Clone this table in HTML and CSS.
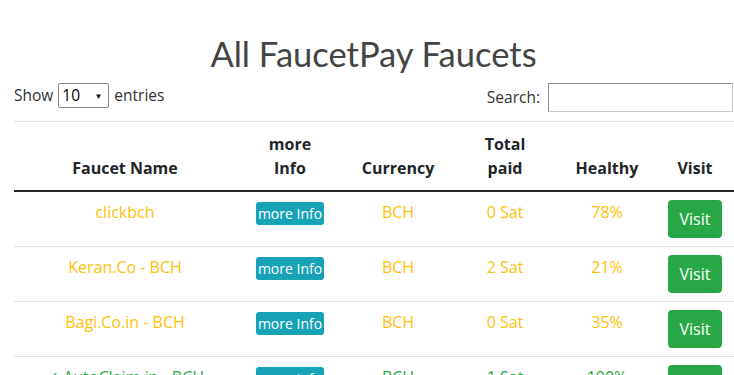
FILE: index.html
```html
<!DOCTYPE html>
<html lang="en">
<head>
<meta charset="utf-8">
<title>All FaucetPay Faucets</title>
<link rel="stylesheet" href="styles.css">
</head>
<body>
<div class="page">
  <h2 class="title">All FaucetPay Faucets</h2>
  <div class="controls">
    <label class="length">Show <span class="select"><span class="select-value">10</span><span class="select-arrow">▼</span></span> entries</label>
    <label class="search">Search: <input type="search" class="search-input"></label>
  </div>
  <table class="faucets">
    <colgroup>
      <col class="c-name"><col class="c-info"><col class="c-cur"><col class="c-paid"><col class="c-health"><col class="c-visit">
    </colgroup>
    <thead>
      <tr>
        <th>Faucet Name</th>
        <th>more<br>Info</th>
        <th>Currency</th>
        <th>Total<br>paid</th>
        <th>Healthy</th>
        <th>Visit</th>
      </tr>
    </thead>
    <tbody>
      <tr class="warn">
        <td>clickbch</td>
        <td><span class="info-btn">more Info</span></td>
        <td>BCH</td>
        <td>0 Sat</td>
        <td>78%</td>
        <td><span class="visit-btn">Visit</span></td>
      </tr>
      <tr class="warn">
        <td>Keran.Co - BCH</td>
        <td><span class="info-btn">more Info</span></td>
        <td>BCH</td>
        <td>2 Sat</td>
        <td>21%</td>
        <td><span class="visit-btn">Visit</span></td>
      </tr>
      <tr class="warn">
        <td>Bagi.Co.in - BCH</td>
        <td><span class="info-btn">more Info</span></td>
        <td>BCH</td>
        <td>0 Sat</td>
        <td>35%</td>
        <td><span class="visit-btn">Visit</span></td>
      </tr>
      <tr class="ok">
        <td>✓ AutoClaim.in - BCH</td>
        <td><span class="info-btn">more Info</span></td>
        <td>BCH</td>
        <td>1 Sat</td>
        <td>100%</td>
        <td><span class="visit-btn">Visit</span></td>
      </tr>
    </tbody>
  </table>
</div>
</body>
</html>
```

FILE: styles.css
```css
html, body {
  margin: 0;
  padding: 0;
  background: #fff;
  overflow: hidden;
}
body {
  font-family: "Open Sans", "Liberation Sans", sans-serif;
  font-size: 16px;
  line-height: 1.5;
  color: #212529;
}
.page {
  padding: 0 1px 0 14px;
}
.title {
  margin: 0;
  padding-top: 34px;
  font-family: Lato, "Open Sans", sans-serif;
  font-weight: 400;
  font-size: 34.5px;
  line-height: 40px;
  color: #444;
  text-align: center;
}
.controls {
  display: flex;
  justify-content: space-between;
  align-items: flex-start;
  margin-top: 9px;
  font-size: 15.5px;
  color: #333;
  height: 38px;
}
.length {
  display: flex;
  align-items: center;
  gap: 5px;
  height: 25px;
}
.select {
  display: inline-flex;
  align-items: center;
  justify-content: space-between;
  box-sizing: border-box;
  width: 51px;
  height: 25px;
  border: 1px solid #8a8a8a;
  border-radius: 2px;
  padding: 0 6px 0 3px;
  color: #000;
}
.select-value {
  font-size: 15.5px;
}
.select-arrow {
  font-size: 8px;
  line-height: 1;
}
.search {
  display: flex;
  align-items: center;
  gap: 8px;
  height: 29px;
}
.search-input {
  box-sizing: border-box;
  width: 185px;
  height: 29px;
  margin: 0;
  border: 1px solid #c8c8c8;
  border-top-color: #8f8f8f;
  border-left-color: #8f8f8f;
  padding: 2px 4px;
  font: inherit;
}
.faucets {
  width: 720px;
  border-collapse: collapse;
  table-layout: fixed;
  text-align: center;
}
.c-name { width: 222px; }
.c-info { width: 108px; }
.c-cur { width: 108px; }
.c-paid { width: 106px; }
.c-health { width: 98px; }
.c-visit { width: 78px; }
.faucets th {
  font-weight: 700;
  vertical-align: bottom;
  padding: 10px 4px 10px;
  border-top: 1px solid #dee2e6;
  border-bottom: 2px solid #212529;
}
.faucets td {
  vertical-align: top;
  padding: 8px 4px;
  border-top: 1px solid #dee2e6;
}
.warn td { color: #ffc107; }
.ok td { color: #28a745; }
.info-btn {
  display: inline-block;
  background: #17a2b8;
  color: #fff;
  font-size: 14px;
  line-height: 21px;
  padding: 1px 2px;
  border-radius: 3px;
  margin-top: 2px;
}
.visit-btn {
  display: inline-block;
  background: #28a745;
  color: #fff;
  font-size: 16px;
  line-height: 24px;
  padding: 7px 12px;
  border-radius: 4px;
}
```
